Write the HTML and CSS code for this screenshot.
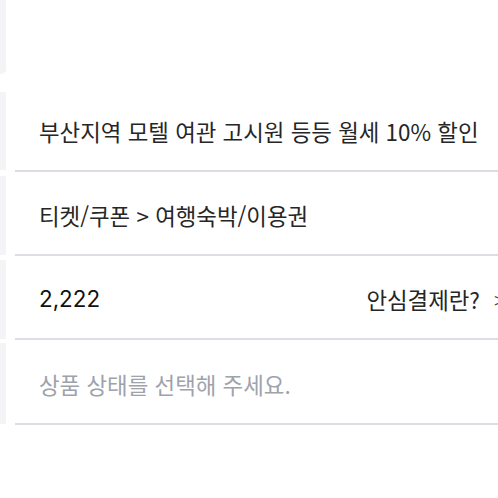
FILE: index.html
```html
<!DOCTYPE html>
<html lang="ko">
<head>
<meta charset="utf-8">
<link rel="stylesheet" href="styles.css">
</head>
<body>
<div class="page">
  <div class="rail">
    <div class="rail-seg seg-1"></div>
    <div class="rail-seg seg-2"></div>
    <div class="rail-seg seg-3"></div>
    <div class="rail-seg seg-4"></div>
    <div class="rail-seg seg-5"></div>
  </div>
  <div class="form">
    <div class="form-top"></div>
    <div class="row row-title"><span class="value">부산지역 모텔 여관 고시원 등등 월세 10% 할인</span></div>
    <div class="row"><span class="value">티켓/쿠폰 &gt; 여행숙박/이용권</span></div>
    <div class="row row-price"><span class="value price">2,222</span><span class="link">안심결제란?<span class="chev">&gt;</span></span></div>
    <div class="row row-last"><span class="value placeholder">상품 상태를 선택해 주세요.</span></div>
  </div>
</div>
</body>
</html>
```

FILE: styles.css
```css
html, body {
  margin: 0;
  padding: 0;
  background: #ffffff;
}
body {
  font-family: "Noto Sans CJK KR", "Noto Sans", sans-serif;
  color: #262626;
  width: 498px;
  height: 498px;
  overflow: hidden;
}
.page {
  display: flex;
  align-items: flex-start;
}
.rail {
  width: 6px;
  flex: 0 0 6px;
  display: flex;
  flex-direction: column;
}
.rail-seg {
  background: #f4f4f6;
}
.seg-1 { height: 74px; border-bottom-right-radius: 5px; margin-bottom: 18px; }
.seg-2 { height: 78px; margin-bottom: 6px; }
.seg-3 { height: 79px; margin-bottom: 5px; }
.seg-4 { height: 79px; margin-bottom: 4px; }
.seg-5 { height: 81px; }
.form {
  flex: 0 0 495px;
  width: 495px;
  margin-left: 9px;
  display: flex;
  flex-direction: column;
}
.form-top {
  height: 88px;
}
.row {
  height: 84px;
  box-sizing: border-box;
  border-bottom: 2px solid #dcdee3;
  display: flex;
  align-items: center;
  padding: 5px 4px 0 24px;
  white-space: nowrap;
}
.row-last {
  height: 85px;
}
.row-title {
  border-bottom-color: #dcdce6;
}
.value {
  font-size: 22.4px;
  line-height: 1;
}
.price {
  color: #111111;
  font-family: "Inter", "Noto Sans CJK KR", sans-serif;
}
.placeholder {
  color: #9ea2ab;
}
.row-price {
  justify-content: space-between;
}
.link {
  font-size: 22.4px;
  line-height: 1;
  color: #262626;
  display: flex;
  align-items: center;
}
.chev {
  color: #444;
  font-weight: 300;
  margin-left: 14px;
}
```
